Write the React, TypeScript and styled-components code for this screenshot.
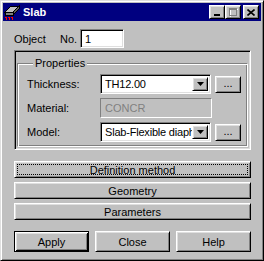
import styled, { createGlobalStyle } from "styled-components";

const GlobalStyle = createGlobalStyle`
  html, body {
    margin: 0;
    padding: 0;
    background: #c0c0c0;
  }
  body {
    font-family: "Liberation Sans", Arial, sans-serif;
    font-size: 11px;
    color: #000;
  }
`;

const raised = `
  background: #c0c0c0;
  border: 1px solid;
  border-color: #fff #000 #000 #fff;
  box-shadow: inset 1px 1px #dfdfdf, inset -1px -1px #808080;
`;

const sunken = `
  border: 1px solid;
  border-color: #808080 #fff #fff #808080;
  box-shadow: inset 1px 1px #000, inset -1px -1px #dfdfdf;
`;

const Window = styled.div`
  width: 264px;
  height: 261px;
  box-sizing: border-box;
  background: #c0c0c0;
  border: 1px solid;
  border-color: #dfdfdf #000 #000 #dfdfdf;
  box-shadow: inset 1px 1px #fff, inset -1px -1px #808080;
  padding: 2px;
  display: flex;
  flex-direction: column;
`;

const TitleBar = styled.div`
  height: 18px;
  background: #000080;
  display: flex;
  align-items: center;
  padding: 0 2px 0 1px;
`;

const TitleText = styled.div`
  flex: 1;
  margin-left: 3px;
  color: #fff;
  font-weight: bold;
  font-size: 11px;
`;

const TitleButton = styled.div<{ $gap?: boolean }>`
  ${raised}
  box-sizing: border-box;
  width: 16px;
  height: 14px;
  margin-left: ${(p) => (p.$gap ? "2px" : "0")};
  display: flex;
  align-items: center;
  justify-content: center;
`;

const Client = styled.div`
  flex: 1;
  display: flex;
  flex-direction: column;
  padding: 6px 10px 0 11px;
`;

const ObjectRow = styled.div`
  display: flex;
  align-items: center;
  height: 19px;
  margin-top: 2px;
`;

const Label = styled.span<{ $w: number }>`
  width: ${(p) => p.$w}px;
  flex: none;
  white-space: nowrap;
`;

const Field = styled.div<{ $w: number; $h?: number; $disabled?: boolean }>`
  box-sizing: border-box;
  width: ${(p) => p.$w}px;
  height: ${(p) => p.$h ?? 19}px;
  padding: 0 4px;
  display: flex;
  align-items: center;
  white-space: nowrap;
  overflow: hidden;
  background: ${(p) => (p.$disabled ? "#c0c0c0" : "#fff")};
  color: ${(p) => (p.$disabled ? "#808080" : "#000")};
  ${(p) =>
    p.$disabled
      ? "border: 1px solid; border-color: #808080 #fff #fff #808080;"
      : sunken}
`;

const Panel = styled.div`
  ${sunken}
  margin-top: 2px;
  padding: 6px 2px 2px 2px;
`;

const Group = styled.fieldset`
  margin: 0;
  padding: 4px 4px 4px 9px;
  border: 1px solid;
  border-color: #808080 #fff #fff #808080;
  box-shadow: inset 1px 1px #fff, inset -1px -1px #808080;
  display: flex;
  flex-direction: column;
  gap: 4px;
`;

const Legend = styled.legend`
  margin-left: 6px;
  padding: 0 2px;
  line-height: 13px;
  background: #c0c0c0;
`;

const PropRow = styled.div`
  display: flex;
  align-items: center;
  height: 20px;
`;

const Combo = styled.div`
  ${sunken}
  box-sizing: border-box;
  width: 111px;
  height: 20px;
  background: #fff;
  display: flex;
  align-items: stretch;
  padding: 2px;
`;

const ComboText = styled.div`
  flex: 1;
  min-width: 0;
  padding-left: 2px;
  display: flex;
  align-items: center;
  white-space: nowrap;
  overflow: hidden;
  letter-spacing: -0.2px;
`;

const DropButton = styled.div`
  ${raised}
  box-sizing: border-box;
  flex: none;
  width: 16px;
  display: flex;
  align-items: center;
  justify-content: center;
`;

const Ellipsis = styled.div`
  ${raised}
  box-sizing: border-box;
  width: 26px;
  height: 17px;
  margin-left: 4px;
  display: flex;
  align-items: center;
  justify-content: center;
  padding-bottom: 2px;
`;

const ButtonStack = styled.div`
  margin-top: 11px;
  display: flex;
  flex-direction: column;
  gap: 4px;
`;

const WideButton = styled.div<{ $focused?: boolean }>`
  ${raised}
  box-sizing: border-box;
  height: 17px;
  display: flex;
  padding: ${(p) => (p.$focused ? "2px" : "0")};
`;

const FocusRing = styled.div<{ $on?: boolean }>`
  flex: 1;
  display: flex;
  align-items: center;
  justify-content: center;
  border: 1px ${(p) => (p.$on ? "dotted #000" : "solid transparent")};
`;

const ActionRow = styled.div`
  margin-top: 11px;
  display: grid;
  grid-template-columns: repeat(3, 1fr);
  gap: 6px;
`;

const ActionButton = styled.div<{ $default?: boolean }>`
  box-sizing: border-box;
  height: 21px;
  display: flex;
  align-items: center;
  justify-content: center;
  background: #c0c0c0;
  ${(p) =>
    p.$default
      ? `border: 1px solid #000;
         box-shadow: inset 1px 1px #fff, inset -1px -1px #000,
           inset 2px 2px #dfdfdf, inset -2px -2px #808080;`
      : `border: 1px solid; border-color: #fff #000 #000 #fff;
         box-shadow: inset 1px 1px #dfdfdf, inset -1px -1px #808080;`}
`;

function SlabIcon() {
  return (
    <svg width="16" height="16" viewBox="0 0 16 16" shapeRendering="crispEdges">
      <polygon points="1,8 7,2 15,2 9,8" fill="#c0c0c0" stroke="#000" strokeWidth="1" />
      <polygon points="1,8 9,8 9,11 1,11" fill="#808080" stroke="#000" strokeWidth="1" />
      <polygon points="9,8 15,2 15,5 9,11" fill="#606060" stroke="#000" strokeWidth="1" />
      <g fill="#ff0000">
        <rect x="1" y="13" width="2" height="1" />
        <rect x="4" y="13" width="2" height="1" />
        <rect x="7" y="13" width="2" height="1" />
        <rect x="2" y="14" width="1" height="2" />
        <rect x="5" y="14" width="1" height="2" />
        <rect x="8" y="14" width="1" height="2" />
      </g>
    </svg>
  );
}

function DownArrow() {
  return (
    <svg width="7" height="4" viewBox="0 0 7 4">
      <polygon points="0,0 7,0 3.5,4" fill="#000" />
    </svg>
  );
}

export default function App() {
  return (
    <>
      <GlobalStyle />
      <Window>
        <TitleBar>
          <SlabIcon />
          <TitleText>Slab</TitleText>
          <TitleButton>
            <svg width="8" height="7" viewBox="0 0 8 7" shapeRendering="crispEdges">
              <rect x="1" y="5" width="6" height="2" fill="#000" />
            </svg>
          </TitleButton>
          <TitleButton>
            <svg width="9" height="9" viewBox="0 0 9 9" shapeRendering="crispEdges">
              <rect x="1.5" y="1.5" width="7.5" height="7.5" fill="none" stroke="#fff" />
              <rect x="0.5" y="0.5" width="7" height="7" fill="none" stroke="#808080" />
              <rect x="0" y="1" width="8" height="1" fill="#808080" />
            </svg>
          </TitleButton>
          <TitleButton $gap>
            <svg width="8" height="7" viewBox="0 0 8 7">
              <path d="M0.5 0.5 L7.5 6.5 M7.5 0.5 L0.5 6.5" stroke="#000" strokeWidth="1.6" />
            </svg>
          </TitleButton>
        </TitleBar>

        <Client>
          <ObjectRow>
            <Label $w={46}>Object</Label>
            <Label $w={20}>No.</Label>
            <Field $w={44}>1</Field>
          </ObjectRow>

          <Panel>
            <Group>
              <Legend>Properties</Legend>
              <PropRow>
                <Label $w={73}>Thickness:</Label>
                <Combo>
                  <ComboText>TH12.00</ComboText>
                  <DropButton>
                    <DownArrow />
                  </DropButton>
                </Combo>
                <Ellipsis>...</Ellipsis>
              </PropRow>
              <PropRow>
                <Label $w={73}>Material:</Label>
                <Field $w={112} $h={20} $disabled>
                  CONCR
                </Field>
              </PropRow>
              <PropRow>
                <Label $w={73}>Model:</Label>
                <Combo>
                  <ComboText>Slab-Flexible diaphragm</ComboText>
                  <DropButton>
                    <DownArrow />
                  </DropButton>
                </Combo>
                <Ellipsis>...</Ellipsis>
              </PropRow>
            </Group>
          </Panel>

          <ButtonStack>
            <WideButton $focused>
              <FocusRing $on>Definition method</FocusRing>
            </WideButton>
            <WideButton>
              <FocusRing>Geometry</FocusRing>
            </WideButton>
            <WideButton>
              <FocusRing>Parameters</FocusRing>
            </WideButton>
          </ButtonStack>

          <ActionRow>
            <ActionButton $default>Apply</ActionButton>
            <ActionButton>Close</ActionButton>
            <ActionButton>Help</ActionButton>
          </ActionRow>
        </Client>
      </Window>
    </>
  );
}
